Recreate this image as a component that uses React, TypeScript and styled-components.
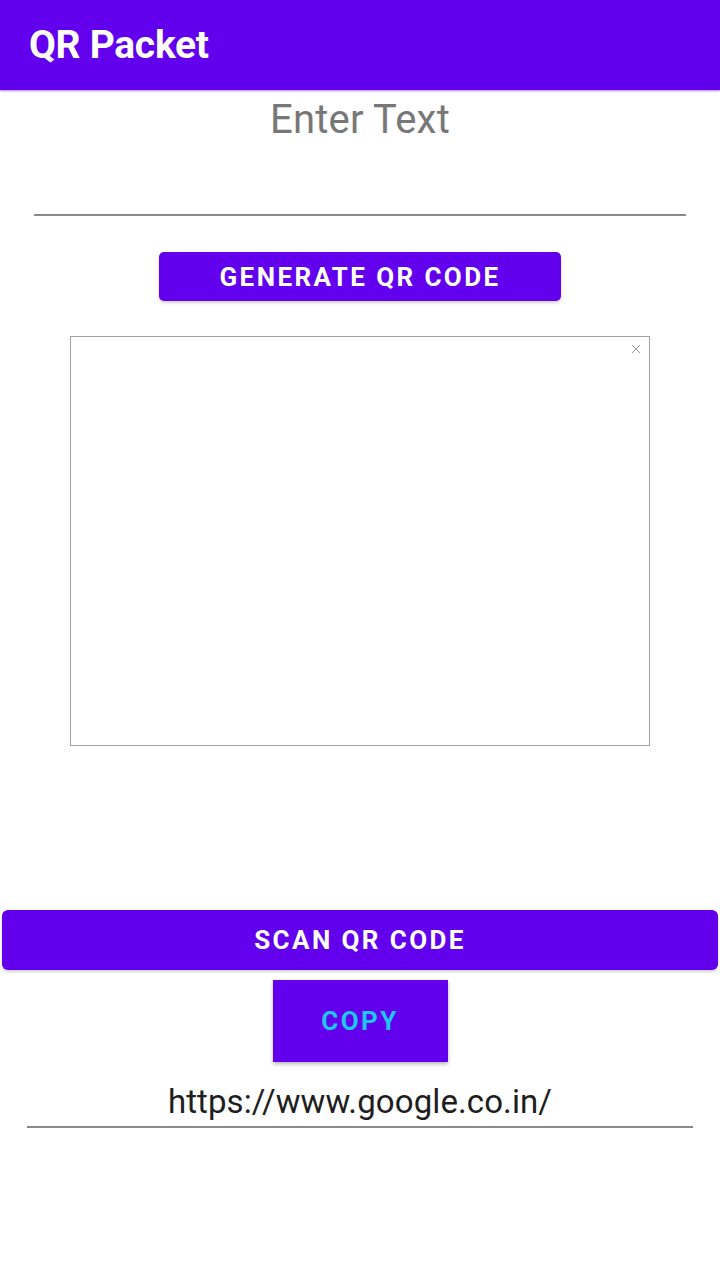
import React from "react";
import styled, { createGlobalStyle } from "styled-components";

const Global = createGlobalStyle`
  html, body { margin: 0; padding: 0; background: #ffffff; }
  body { font-family: Roboto, "Noto Sans", sans-serif; }
  * { box-sizing: border-box; }
`;

const Screen = styled.div`
  width: 720px;
  height: 1280px;
  background: #ffffff;
  display: flex;
  flex-direction: column;
  align-items: center;
`;

const AppBar = styled.header`
  width: 100%;
  height: 90px;
  background: #6200ee;
  display: flex;
  align-items: center;
  padding-left: 29px;
  box-shadow: 0 1px 2px rgba(98, 0, 238, 0.5);
`;

const Title = styled.h1`
  margin: 0;
  color: #ffffff;
  font-family: Roboto, sans-serif;
  font-weight: 700;
  font-size: 39px;
  letter-spacing: -0.3px;
`;

const Field = styled.div<{ $top: number; $height: number; $inset: number }>`
  align-self: stretch;
  margin: ${(p) => p.$top}px ${(p) => p.$inset}px 0;
  height: ${(p) => p.$height}px;
  border-bottom: 2px solid #8a8a8a;
  display: flex;
  justify-content: center;
`;

const Hint = styled.div`
  font-size: 40px;
  line-height: 44px;
  color: #777777;
  padding-top: 8px;
  letter-spacing: 0.2px;
`;

const Value = styled.div`
  font-size: 33px;
  line-height: 38px;
  color: #1e1e1e;
  padding-top: 3px;
  letter-spacing: 0.1px;
`;

const PrimaryButton = styled.button<{ $w: number; $h: number; $top: number; $radius: number }>`
  width: ${(p) => p.$w}px;
  height: ${(p) => p.$h}px;
  margin-top: ${(p) => p.$top}px;
  border: none;
  border-radius: ${(p) => p.$radius}px;
  background: #6200ee;
  color: #ffffff;
  font-family: Roboto, sans-serif;
  font-weight: 700;
  font-size: 26px;
  letter-spacing: 2.4px;
  display: flex;
  align-items: center;
  justify-content: center;
  padding: 0;
  box-shadow: 0 2px 3px rgba(0, 0, 0, 0.18);
`;

const CopyButton = styled(PrimaryButton)`
  color: #1ec6f2;
  box-shadow: 0 2px 4px rgba(0, 0, 0, 0.3);
`;

const ImageFrame = styled.div`
  position: relative;
  width: 580px;
  height: 410px;
  margin-top: 35px;
  border: 1px solid #a0a0a0;
  background: #ffffff;
`;

const Close = styled.svg`
  position: absolute;
  top: 7px;
  right: 8px;
`;

const Spacer = styled.div`
  height: 164px;
`;

export default function App() {
  return (
    <>
      <Global />
      <Screen>
        <AppBar>
          <Title>QR Packet</Title>
        </AppBar>
        <Field $top={0} $height={126} $inset={34}>
          <Hint>Enter Text</Hint>
        </Field>
        <PrimaryButton $w={402} $h={49} $top={36} $radius={5}>
          GENERATE QR CODE
        </PrimaryButton>
        <ImageFrame>
          <Close width="10" height="10" viewBox="0 0 10 10">
            <path d="M1 1L9 9M9 1L1 9" stroke="#9a9a9a" strokeWidth="1" />
          </Close>
        </ImageFrame>
        <Spacer />
        <PrimaryButton $w={716} $h={60} $top={0} $radius={6}>
          SCAN QR CODE
        </PrimaryButton>
        <CopyButton $w={175} $h={82} $top={10} $radius={0}>
          COPY
        </CopyButton>
        <Field $top={18} $height={48} $inset={27}>
          <Value>https://www.google.co.in/</Value>
        </Field>
      </Screen>
    </>
  );
}
